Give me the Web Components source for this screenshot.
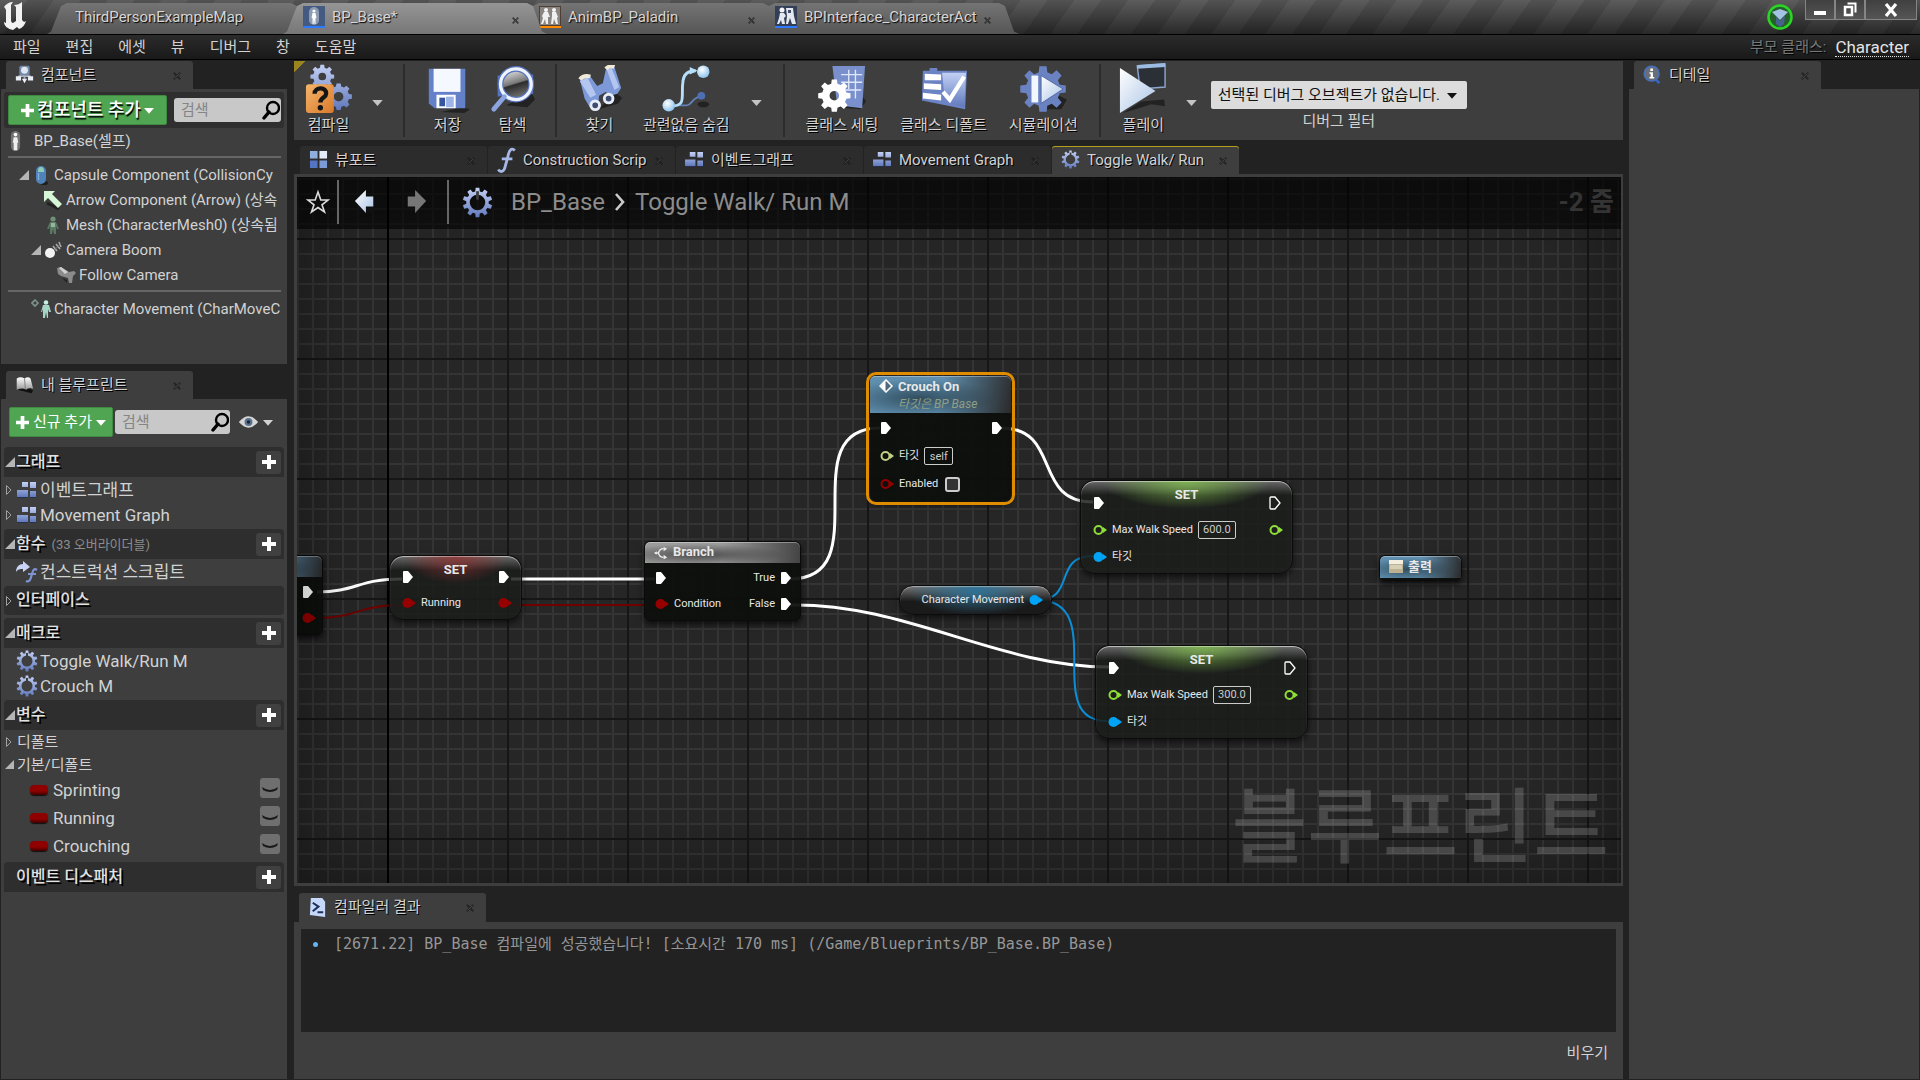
<!DOCTYPE html>
<html lang="ko">
<head>
<meta charset="utf-8">
<title>BP_Base</title>
<style>
    html, body { height: 100%; }
    body {
        margin: 0;
        background: #222222;
        color: #d2d2d2;
        font: 15px/20px Roboto, "Noto Sans CJK KR", sans-serif;
        overflow: hidden;
    }
</style>
</head>
<body>
<blueprint-editor></blueprint-editor>

<script>
// Shared by every shadow root
const baseStyle = `
    * { box-sizing: border-box; }
    button, input, select {
        font: inherit;
        color: inherit;
        margin: 0;
        padding: 0;
        border: 0;
        background: none;
        outline: none;
    }
    button { cursor: pointer; white-space: nowrap; }
`;

function define(name, html, setup) {
    const template = document.createElement('template');
    template.innerHTML = html.replace('<style>', '<style>' + baseStyle);

    customElements.define(name, class extends HTMLElement {
        constructor() {
            super();
            this.attachShadow({ mode: 'open' }).appendChild(template.content.cloneNode(true));
        }

        connectedCallback() {
            if (setup) setup.call(this, this.shadowRoot);
        }
    });
}

// Outline of a cog with a round hole
function cog(cx, cy, outer, inner, hole, teeth) {
    const points = [];
    const step = Math.PI * 2 / teeth;
    for (let i = 0; i < teeth; i++) {
        [[-0.32, inner], [-0.2, outer], [0.2, outer], [0.32, inner]].forEach(([t, r]) => {
            const a = (i + t) * step - Math.PI / 2;
            points.push((cx + r * Math.cos(a)).toFixed(2) + ' ' + (cy + r * Math.sin(a)).toFixed(2));
        });
    }
    return `M${points.join('L')}Z M${cx - hole} ${cy}a${hole} ${hole} 0 1 0 ${hole * 2} 0a${hole} ${hole} 0 1 0 ${-hole * 2} 0Z`;
}

const defs = `<defs>
    <linearGradient id="steel" x1="0" y1="0" x2="0" y2="1"><stop offset="0" stop-color="#c3d0f4"/><stop offset="1" stop-color="#6079bd"/></linearGradient>
    <linearGradient id="pale" x1="0" y1="0" x2="1" y2="1"><stop offset="0" stop-color="#fff"/><stop offset="1" stop-color="#a9c3e6"/></linearGradient>
    <linearGradient id="grey" x1="0" y1="0" x2="0" y2="1"><stop offset="0" stop-color="#fff"/><stop offset="1" stop-color="#9a9a9a"/></linearGradient>
    <linearGradient id="orange" x1="0" y1="0" x2="1" y2="1"><stop offset="0" stop-color="#f5b56b"/><stop offset="1" stop-color="#d9792b"/></linearGradient>
    <linearGradient id="lens" x1=".2" y1="0" x2=".5" y2="1"><stop offset="0" stop-color="#f2f2f2"/><stop offset=".5" stop-color="#777"/><stop offset=".55" stop-color="#2c2c2c"/><stop offset="1" stop-color="#777"/></linearGradient>
    <radialGradient id="ball" cx=".4" cy=".35" r=".65"><stop offset="0" stop-color="#fff"/><stop offset="1" stop-color="#8fc4ee"/></radialGradient>
</defs>`;

// name: [view box, markup]
const icons = {
    unreal: ['0 0 26 30', '<path fill="#f2f2f2" d="M2 6C4 3 7 1 11 1L9 4v15c0 2 1 3 2 3l3-2V6l-2-2c3 0 6-1 8-3v18l2 2 2-1c-1 4-4 7-7 8l-2-2-4 3C6 28 2 25 2 21l2 1V9L3 7Z"/>'],
    close: ['0 0 10 10', '<path d="M1 1l8 8M9 1L1 9" stroke="#1c1c1c" stroke-opacity=".75" stroke-width="2.4"/><path d="M2 8l6-6" stroke="#777" stroke-opacity=".5"/>'],
    actor: ['0 0 22 22', '<rect width="22" height="22" fill="#455a80"/><path fill="#2f7bff" d="M0 20h22v2H0z"/><rect x="6" y="1" width="10" height="18" rx="5" fill="#8e9cb2"/><circle cx="11" cy="5" r="1.6" fill="#fff"/><path fill="#fff" d="M9.500 7h3l1 5h-1v6h-1l-.5-5-.5 5h-1v-6h-1z"/>'],
    anim: ['0 0 22 22', '<rect width="22" height="22" fill="#4d3f33"/><rect x="1" y="1" width="20" height="18" fill="#8a8580"/><path fill="#ff8a00" d="M0 20h22v2H0z"/><circle cx="7" cy="4" r="2" fill="#f5f5f5"/><circle cx="15" cy="4" r="2" fill="#f5f5f5"/><path fill="#f0f0f0" d="M5 6h4l2 5-2 0v7H7l-1-5-2 5H2l2-6-1-2zM13 6h4l2 5-1 1 1 6h-2l-2-5-1 5h-2l1-8z"/>'],
    iface: ['0 0 22 22', '<rect width="22" height="22" fill="#333f58"/><path fill="#2f7bff" d="M0 20h22v2H0z"/><circle cx="7" cy="4" r="2.500" fill="#f5f5f5"/><path fill="#e4e8ef" d="M5 7h4l2 3-2 2 1 6H7l-1-4-2 4H2l2-6zM11 2h7l1 8 2 8h-4l-2-6-2 6h-2l1-8z"/><path fill="#42506e" d="M13 4h3v3h-3z"/>'],
    components: ['0 0 22 22', '<rect x="5" y="1" width="12" height="11" rx="2" fill="#7389ab"/><circle cx="11" cy="6" r="4" fill="#dfe6f2"/><path d="M11 12v4M4 13h14" stroke="#aeb7c4" stroke-width="2"/><path fill="#e9eef5" d="M1 13h6v5H1zM15 13h6v5h-6zM8 16h6l-3 5z"/>'],
    self: ['0 0 14 24', '<rect x="2" y="1" width="10" height="22" rx="5" fill="#737373"/><circle cx="7" cy="5" r="2" fill="#fff"/><path fill="#eee" d="M5 8h4l1 6H9v8H5v-8H4z"/>'],
    capsule: ['0 0 14 22', '<ellipse cx="10" cy="19" rx="4" ry="2" fill="#1e1e1e"/><rect x="2" y="2" width="10" height="18" rx="5" fill="#4f82b8"/><path d="M4 7a3 4 0 0 1 6 0v1H4z" fill="#8fc9b8"/><path d="M4.500 9v7" stroke="#7eaad8" stroke-width="1.5"/>'],
    arrow: ['0 0 20 20', '<path d="M4 13l12 6" stroke="#222" stroke-width="3"/><path fill="#d5f7d5" d="M1 1h11L9 4l10 10-4 4L5 8l-4 4z"/>'],
    mesh: ['0 0 14 20', '<circle cx="7" cy="4" r="2.6" fill="#6f9078"/><path fill="#5b7a64" d="M4 7h6l3 7h-2l-1-3v8H8l-1-5-1 5H4v-8l-1 3H1z"/><path fill="#98b59f" d="M5 8h4v4H5z"/>'],
    boom: ['0 0 18 18', '<circle cx="6" cy="12" r="5" fill="#f2f2f2"/><path d="M9 5l4 5M12 3l4 5M15 1l2 5" stroke="#aaa" stroke-width="1.6"/><path d="M10 9l7-6" stroke="#777"/>'],
    camera: ['0 0 20 18', '<path fill="#8b8b8b" d="M1 2l4-1 8 5 5-1 2 2-3 3-1 7h-3l-1-5-7-2-3-2z"/><path fill="#d0d0d0" d="M3 2l2-1 7 5-3 2z"/><path fill="#222" d="M6 12l5 2v3z"/>'],
    movement: ['0 0 20 20', '<path d="M4 1l3 3-3 3-3-3z" fill="none" stroke="#7d948b" stroke-width="1.6"/><circle cx="15" cy="3.5" r="2.3" fill="#c7efe2"/><path fill="#a5d6c6" d="M12 6h6l2 7h-2l-1-3v9h-1l-1-6-1 6h-2v-9l-1 3h-1z"/>'],
    book: ['0 0 22 22', '<path fill="#111" d="M3 17l16 4 2-3-8-4z"/><path fill="url(#grey)" d="M2 4c3-2 6-2 9 0 3-2 5-2 7 0l3 12c-3-2-6-1-8 1-3-2-7-2-11 0z"/><path d="M11 4l1 12" stroke="#777"/>'],
    search: ['0 0 18 20', '<circle cx="11" cy="8" r="6" fill="none" stroke="#000" stroke-width="2.4"/><path d="M7 12l-5 6" stroke="#000" stroke-width="3.4" stroke-linecap="round"/>'],
    plus: ['0 0 14 14', '<path fill="#fff" d="M5 0h4v5h5v4H9v5H5V9H0V5h5z"/>'],
    down: ['0 0 12 8', '<path fill="currentColor" d="M0 1h12L6 8z"/>'],
    opened: ['0 0 10 10', '<path fill="#b5b5b5" d="M10 0v10H0z"/>'],
    closed: ['0 0 8 12', '<path fill="none" stroke="#a0a0a0" d="M1.5 1.5L6 6l-4.5 4.5z"/>'],
    eye: ['0 0 24 16', '<path fill="#d5d5d5" d="M1 8q11-13 22 0-11 13-22 0z"/><circle cx="12" cy="8" r="4.5" fill="#5b7190"/><circle cx="12" cy="8" r="2" fill="#1d2633"/>'],
    lid: ['0 0 20 20', '<rect width="20" height="20" rx="3" fill="#6f6f6f"/><path d="M2 9q8 6 16 0l-1 3q-7 4-14 0z" fill="#191919"/>'],
    graph: ['0 0 20 18', '<path fill="url(#steel)" d="M5 1h6v5H5zM13 1h6v6h-6zM0 9h11v7H0zM13 10h6v6h-6z"/><path d="M0 16.5h11M13 16.5h6" stroke="#28304a"/>'],
    func: ['0 0 16 22', '<path d="M15 3c-3-3-5 0-6 6l-2 7c-1 5-4 6-6 3M4 10h9" fill="none" stroke="#a5b7e6" stroke-width="2.4"/>'],
    construct: ['0 0 22 22', '<path fill="#c9d5f7" d="M0 11c0-5 3-8 7-8V0l7 6-7 5V8c-3 0-5 0-7 3z"/><path d="M21 9c-3-2-4 0-5 4s-2 9-6 7M12 13h8" fill="none" stroke="#7d93d3" stroke-width="2.2"/>'],
    cog: ['0 0 22 22', `<path fill="url(#steel)" fill-rule="evenodd" d="${cog(11, 11, 10.5, 8, 5.5, 10)}"/><path d="M11 3v6" stroke="#3d3d3d" stroke-width="2"/>`],
    viewport: ['0 0 20 22', '<path fill="#8eaede" d="M1 2h8v8H1z"/><path fill="#e3ebf6" d="M11 2h8v8h-8z"/><path fill="#5374c2" d="M1 12h8v8H1z"/><path fill="#7c9bd6" d="M11 12h8v8h-8z"/>'],
    log: ['0 0 20 22', '<path fill="#c6d9fb" d="M3 1h12l3 4v16L2 19z"/><path d="M5 6l6 4-6 5M10 16h6" fill="none" stroke="#1f3157" stroke-width="2.2"/>'],
    details: ['0 0 22 22', '<path d="M14 16l5 5" stroke="#3566c5" stroke-width="3"/><circle cx="10" cy="10" r="8.5" fill="#6a6e75" stroke="#4a6fb5" stroke-width="2"/><path fill="#fff" d="M8.5 4h3v3h-3zM7.5 8.5h4V14H13v1.5H7.5V14h1.300v-4H7.500z"/>'],
    star: ['0 0 26 26', '<path d="M13 3l2.800 8H23l-6 4.800L19.500 23 13 18.500 6.500 23 9 15.800 3 11h7.200z" fill="none" stroke="#ddd" stroke-width="1.6"/>'],
    back: ['0 0 24 28', '<path fill="#111" d="M6 20l15 4v3z"/><path fill="url(#pale)" d="M1 13L13 1v7h8v11h-8v7z"/>'],
    forward: ['0 0 24 28', '<path fill="#777" d="M23 13L11 1v7H3v11h8v7z"/>'],
    chevron: ['0 0 14 22', '<path d="M3 3l7 8-7 8" fill="none" stroke="#ccc" stroke-width="2.6"/>'],
    compile: ['0 0 50 52', `<path fill="url(#steel)" fill-rule="evenodd" d="${cog(18, 13, 12.5, 9.5, 4, 8)} ${cog(35, 34, 14, 11, 5, 8)}"/><rect x="1" y="21" width="29" height="30" rx="3" fill="url(#orange)"/><path d="M10 31c0-8 13-7 12 0 0 4-6 4-6 9" fill="none" stroke="#151515" stroke-width="4.5"/><circle cx="16" cy="45.5" r="2.8" fill="#151515"/>`],
    save: ['0 0 50 50', '<path fill="#111" opacity=".6" d="M40 44l8 2-6 4-24-1z"/><path fill="#6480c8" d="M5 4h38v41H11l-6-5z"/><path fill="#f5f8ff" d="M10 4h28v24H10z"/><path fill="#fff" d="M13 31h20v14H13z"/><path fill="#3855a0" d="M16 34h6v9h-6z"/><path fill="#9eb4e8" d="M23 33h8v11h-8z"/>'],
    browse: ['0 0 50 50', '<path fill="#111" opacity=".6" d="M18 42l22 2 8-8-4-8z"/><path fill="#5674bd" d="M9 11h8l2 20-10 2zM38 10h8v20l-8 2z"/><circle cx="28" cy="20" r="16" fill="url(#lens)" stroke="#5674bd" stroke-width="6"/><circle cx="28" cy="20" r="16" fill="none" stroke="#eef3fd" stroke-width="3.4"/><path d="M16 33L5 46" stroke="#8ca5e0" stroke-width="5" stroke-linecap="round"/>'],
    find: ['0 0 50 50', '<path fill="#111" opacity=".6" d="M24 46l20-6 4-6-8-6z"/><path fill="#7d99d8" d="M4 15l11-3 7 10 6-3 3-14 9-3 7 22-4 6-7 2-5-4-7 4-1 12-8 1-6-10z"/><path fill="#b4c6f0" d="M4 17l8-4 9 18-6 3zM32 5l5-2 8 20-5 3z"/><path d="M4 15q4-5 11-3M31 4q4-4 9-2" stroke="#f1ead8" stroke-width="4" fill="none"/><circle cx="20" cy="42" r="4.500" fill="#3d4c70" stroke="#e7edf8" stroke-width="3"/><circle cx="34" cy="35" r="4.500" fill="#3d4c70" stroke="#e7edf8" stroke-width="3"/>'],
    hide: ['0 0 50 50', '<path d="M6 42h20c5 0 5-8 14-9" fill="none" stroke="#6482ba" stroke-width="1.8"/><path d="M8 43c19 0 11-10 14-27 1-7 6-10 13-10" fill="none" stroke="#b6dffb" stroke-width="3"/><path fill="#b6dffb" d="M29 2l8 4-8 4z"/><circle cx="43" cy="7" r="6.5" fill="url(#ball)"/><circle cx="7" cy="42" r="6.5" fill="url(#ball)"/><circle cx="41" cy="32" r="4" fill="#4f6fb5"/><ellipse cx="43" cy="41" rx="6" ry="3" fill="#222"/>'],
    settings: ['0 0 50 50', `<path fill="#111" opacity=".6" d="M18 44l26 2 6-8-4-6z"/><path fill="#7a90cc" d="M15 1h34l-3 44-26-3z"/><path d="M24 10h22M24 18h22M28 26h17M32 5v20M39 5v30" stroke="#dfe7fb" stroke-width="1.4"/><path fill="#fff" fill-rule="evenodd" d="${cog(17, 32, 17, 13, 5, 8)}"/>`],
    defaults: ['0 0 50 50', '<path fill="#6c83c4" d="M3 6h7V3h8v3h31l-2 40-45-9z"/><path fill="url(#steel)" d="M23 8h25l-2 36-20-6z"/><path fill="#fff" d="M5 9l17 1v6H5zM4 19l18 1v6L4 25zM3 29l19 2v6L3 35z"/><path d="M24 28l7 8 15-24" fill="none" stroke="#fff" stroke-width="4.5"/>'],
    simulate: ['0 0 50 50', `<path fill="#111" opacity=".6" d="M20 46l24 0 6-10-8-4z"/><path fill="#6b82c2" d="${cog(25, 25, 24, 18, 2, 8)}"/><path fill="#f1f6ff" d="M13 11h7v28h-7z"/><path fill="url(#pale)" d="M23 11l23 14-23 15z" stroke="#5069a5"/>`],
    play: ['0 0 50 54', '<path fill="#111" opacity=".6" d="M4 52l30-9 14 2-1-7-24 2z"/><path fill="#2b2f36" stroke="#8ca6cf" stroke-width="1.5" d="M19 3l29-2v24l-26 2z"/><path fill="#9cbbe2" d="M19 2l29-2v4l-29 2z"/><path fill="url(#pale)" d="M1 5l37 24L1 52z"/>'],
    tutorial: ['0 0 26 26', '<circle cx="13" cy="13" r="12.5" fill="#275f2c"/><circle cx="13" cy="13" r="11.5" fill="none" stroke="#2bd524" stroke-width="2.5"/><path fill="#a3c2e4" d="M5 8l8-3 8 3-8 8z"/><path fill="#48628f" d="M9 13l4 4 5-5-1 8-4 3-4-3z"/>'],
    min: ['0 0 16 16', '<path fill="#fff" d="M2 9h12v4H2z"/>'],
    restore: ['0 0 16 16', '<path d="M5.500 1.500h8v9" stroke="#fff" stroke-width="2" fill="none"/><path d="M3 5h7v8H3z" stroke="#fff" stroke-width="2.5" fill="none"/>'],
    exit: ['0 0 16 16', '<path d="M3 2l10 12M13 2L3 14" stroke="#fff" stroke-width="3.2"/>'],
    branch: ['0 0 16 16', '<path d="M2 8h3c1-4 3-5 6-5M5 8c1 4 3 5 6 5" fill="none" stroke="#eee" stroke-width="1.5"/><path fill="#eee" d="M0 8l3-2v4zM11 1l4 2-4 3zM11 10l4 3-4 2z"/>'],
    event: ['0 0 14 14', '<path d="M7 1l6 6-6 6-6-6z" fill="#50687c" stroke="#fff" stroke-width="1.5"/><path d="M6.500 2v10L1.500 7z" fill="#fff"/>'],
    output: ['0 0 14 14', '<path fill="#f3eedd" d="M0 0h14v4H0z"/><path fill="#bcb291" d="M0 4h14v9H0z"/><path fill="#d6cfb5" d="M1 5h12v4H1z"/>'],
    exec: ['0 0 12 14', '<path fill="#fff" d="M1 2q0-1 1-1h4l5 6-5 6H2q-1 0-1-1z"/>'],
    'exec-open': ['0 0 12 14', '<path fill="none" stroke="#fff" stroke-width="1.3" d="M1 2q0-1 1-1h4l5 6-5 6H2q-1 0-1-1z"/>'],
    data: ['0 0 14 12', '<circle cx="5.5" cy="6" r="5" fill="currentColor"/><path fill="currentColor" d="M10 3l4 3-4 3z"/>'],
    'data-open': ['0 0 14 12', '<circle cx="5.5" cy="6" r="4" fill="none" stroke="currentColor" stroke-width="2"/><path fill="currentColor" d="M10 3l4 3-4 3z"/>'],
};

define('ue-icon', `
    <style>
    :host { display: inline-flex; flex: none; }
    svg { display: block; }
    </style>
    <span></span>
`, function (root) {
    const [box, markup] = icons[this.getAttribute('name')];
    const [, , w, h] = box.split(' ').map(Number);
    const width = Number(this.getAttribute('size')) || w;
    root.querySelector('span').innerHTML =
        `<svg viewBox="${box}" width="${width}" height="${Math.round(width * h / w)}" aria-hidden="true">${defs}${markup}</svg>`;
});

// Title bar tab with slanted sides
define('window-tab', `
    <style>
    :host {
        position: relative;
        display: flex;
        align-items: center;
        width: 236px;
        height: 31px;
        padding: 0 20px 3px 0;
        color: #d6d6d6;
    }
    :host::before {
        content: "";
        position: absolute;
        inset: 0 -8px 0 -20px;
        background: linear-gradient(#747474, #565656);
        clip-path: polygon(0 100%, 4px 92%, 14px 10%, 20px 0, calc(100% - 20px) 0, calc(100% - 14px) 10%, calc(100% - 5px) 92%, 100% 100%);
    }
    :host([active]) { z-index: 1; }
    :host([active])::before { background: linear-gradient(#959595, #777777); }
    ue-icon { position: relative; margin-right: 7px; }
    button.label {
        position: relative;
        flex: 1;
        min-width: 0;
        overflow: hidden;
        text-align: left;
        text-shadow: 1px 1px 1px #000;
    }
    button.close { position: relative; padding: 3px 0 0 6px; }
    button.close ue-icon { margin: 0; }
    </style>
    <button class="label"><slot></slot></button>
`, function (root) {
    const icon = this.getAttribute('icon');
    if (!icon) return;
    root.querySelector('.label').insertAdjacentHTML('beforebegin', `<ue-icon name="${icon}"></ue-icon>`);
    root.querySelector('.label').insertAdjacentHTML('afterend', '<button class="close" aria-label="닫기"><ue-icon name="close" size="7"></ue-icon></button>');
});

define('title-bar', `
    <style>
    :host {
        display: flex;
        align-items: flex-end;
        flex: none;
        height: 34px;
        background:
            linear-gradient(rgba(255,255,255,.1), rgba(0,0,0,.45)),
            repeating-linear-gradient(125deg, #4a4a4a 0 22px, #3f3f3f 22px 44px);
    }
    .logo { width: 67px; height: 34px; padding: 1px 0 0 2px; }
    .tabs { display: flex; flex: 1; }
    .tabs window-tab:first-child { padding-left: 8px; }
    ue-icon.tutorial { align-self: flex-start; padding: 4px 12px 0 0; }
    .buttons { display: flex; align-self: flex-start; padding-right: 3px; }
    .buttons button {
        display: flex;
        justify-content: center;
        align-items: center;
        width: 30px;
        height: 20px;
        border: 1px solid #858585;
        border-top: 0;
        background: linear-gradient(#404040, #555555);
    }
    .buttons button:last-child { width: 52px; }
    </style>
    <div class="logo"><ue-icon name="unreal" size="26"></ue-icon></div>
    <div class="tabs">
        <window-tab>ThirdPersonExampleMap</window-tab>
        <window-tab icon="actor" active>BP_Base*</window-tab>
        <window-tab icon="anim">AnimBP_Paladin</window-tab>
        <window-tab icon="iface">BPInterface_CharacterAct</window-tab>
    </div>
    <ue-icon class="tutorial" name="tutorial" size="26"></ue-icon>
    <div class="buttons">
        <button aria-label="최소화"><ue-icon name="min"></ue-icon></button>
        <button aria-label="복원"><ue-icon name="restore"></ue-icon></button>
        <button aria-label="닫기"><ue-icon name="exit"></ue-icon></button>
    </div>
`);

define('menu-bar', `
    <style>
    :host {
        display: flex;
        align-items: center;
        flex: none;
        gap: 25px;
        height: 26px;
        padding: 0 11px 0 13px;
        border: solid #000;
        border-width: 1px 0;
        background: linear-gradient(#2b2b2b, #191919);
    }
    .parent { margin-left: auto; color: #777777; text-shadow: 1px 1px 1px #000; }
    a { margin-left: -16px; color: #e4e4e4; font-size: 17px; line-height: 18px; text-decoration: none; border-bottom: 1px dotted #ddd; }
    </style>
    <button>파일</button><button>편집</button><button>에셋</button><button>뷰</button>
    <button>디버그</button><button>창</button><button>도움말</button>
    <span class="parent">부모 클래스:</span>
    <a href="#character">Character</a>
`);

define('dock-tab', `
    <style>
    :host {
        display: flex;
        align-items: center;
        flex: none;
        width: 187px;
        height: 28px;
        padding: 0 12px 1px 6px;
        border-radius: 3px 3px 0 0;
        background: #2c2c2c;
    }
    :host([active]) { background: #3e3e3e; }
    :host([current]) { background: #3e3e3e; box-shadow: inset 0 1px 0 #b3a01c; }
    .icon { display: flex; justify-content: center; width: 24px; margin-right: 5px; }
    .label {
        flex: 1;
        min-width: 0;
        overflow: hidden;
        text-align: left;
        text-shadow: 1px 1px 0 #000;
    }
    .close { padding-left: 4px; }
    </style>
    <span class="icon"></span>
    <button class="label"><slot></slot></button>
    <button class="close" aria-label="닫기"><ue-icon name="close" size="8"></ue-icon></button>
`, function (root) {
    root.querySelector('.icon').innerHTML = `<ue-icon name="${this.getAttribute('icon')}" size="19"></ue-icon>`;
});

define('search-box', `
    <style>
    :host { display: flex; min-width: 0; }
    label {
        display: flex;
        align-items: center;
        width: 100%;
        height: 24px;
        padding: 0 1px 0 7px;
        border-radius: 3px;
        background: #c8c8c8;
        color: #111;
    }
    input { flex: 1; min-width: 0; }
    input::placeholder { color: #858585; opacity: 1; }
    </style>
    <label><input type="text" placeholder="검색" aria-label="검색"><ue-icon name="search"></ue-icon></label>
`);

define('add-button', `
    <style>
    :host { display: flex; flex: none; }
    button {
        display: flex;
        align-items: center;
        justify-content: center;
        gap: 4px;
        width: 100%;
        height: 30px;
        border: 1px solid #3f8a40;
        border-radius: 2px;
        background: #50a552;
        color: #fff;
    }
    :host([strong]) button { font-size: 18px; gap: 3px; font-weight: 500; text-shadow: 1px 2px 1px #000; }
    </style>
    <button><ue-icon name="plus" size="13"></ue-icon><slot></slot><ue-icon name="down" size="10"></ue-icon></button>
`);

define('tree-row', `
    <style>
    :host {
        display: flex;
        align-items: center;
        height: 25px;
        overflow: hidden;
        white-space: nowrap;
    }
    .arrow { display: flex; flex: none; width: 11px; }
    .icon { display: flex; flex: none; justify-content: center; width: 22px; }
    .text { padding-left: 2px; }
    </style>
    <span class="arrow"></span><span class="icon"></span><span class="text"><slot></slot></span>
`, function (root) {
    const arrow = this.getAttribute('arrow');
    this.style.paddingLeft = (this.getAttribute('indent') || 0) + 'px';
    if (arrow) root.querySelector('.arrow').innerHTML = `<ue-icon name="${arrow}"></ue-icon>`;
    root.querySelector('.icon').innerHTML = `<ue-icon name="${this.getAttribute('icon')}"></ue-icon>`;
});

define('category-header', `
    <style>
    :host {
        display: flex;
        align-items: center;
        height: 30px;
        padding: 0 3px 0 1px;
        border-radius: 4px 4px 0 0;
        background: #2e2e2e;
    }
    .arrow { display: flex; width: 11px; }
    h3 {
        flex: 1;
        margin: 0;
        font-size: 16px;
        font-weight: 500;
        color: #e2e2e2;
        text-shadow: 2px 2px 0 #000;
    }
    small { margin-left: 6px; font-size: 13px; font-weight: 400; color: #8c8c8c; text-shadow: none; }
    .add {
        display: flex;
        align-items: center;
        justify-content: center;
        width: 25px;
        height: 23px;
        border-radius: 3px;
        background: #404040;
    }
    </style>
    <span class="arrow"></span>
    <h3><slot></slot><small></small></h3>
`, function (root) {
    const arrow = this.getAttribute('arrow');
    if (arrow) root.querySelector('.arrow').innerHTML = `<ue-icon name="${arrow}"></ue-icon>`;
    root.querySelector('small').textContent = this.getAttribute('note') || '';
    if (!this.hasAttribute('plain')) {
        root.querySelector('h3').insertAdjacentHTML('afterend', '<button class="add" aria-label="추가"><ue-icon name="plus"></ue-icon></button>');
    }
});

define('variable-row', `
    <style>
    :host { display: flex; align-items: center; height: 28px; padding: 0 4px 0 26px; font-size: 17px; }
    i { width: 18px; height: 10px; margin-right: 5px; border-radius: 4px; background: linear-gradient(#8f0000 60%, #3d0000); box-shadow: 0 1px 1px #111; }
    span { flex: 1; }
    </style>
    <i></i><span><slot></slot></span>
    <button aria-label="공개 여부"><ue-icon name="lid"></ue-icon></button>
`);

define('components-panel', `
    <style>
    :host { display: block; margin-bottom: 7px; }
    dock-tab { margin-left: 5px; }
    .panel { height: 275px; padding: 3px; background: #3e3e3e; }
    .tools { display: flex; align-items: center; gap: 7px; height: 36px; padding: 0 3px 0 4px; background: #2f2f2f; border-radius: 3px; }
    add-button { width: 159px; }
    search-box { flex: 1; }
    .self { display: flex; align-items: center; gap: 12px; height: 28px; padding: 0 0 2px 5px; }
    hr { height: 2px; margin: 0 3px 4px 4px; border: 0; background: #666; }
    .list { padding: 0 2px 0 0; }
    .list hr { margin: 3px 1px 4px 4px; }
    </style>
    <dock-tab icon="components" active>컴포넌트</dock-tab>
    <div class="panel">
        <div class="tools">
            <add-button strong>컴포넌트 추가</add-button>
            <search-box></search-box>
        </div>
        <div class="self"><ue-icon name="self" size="13"></ue-icon><span>BP_Base(셀프)</span></div>
        <hr>
        <div class="list">
            <tree-row indent="15" arrow="opened" icon="capsule">Capsule Component (CollisionCy</tree-row>
            <tree-row indent="27" icon="arrow">Arrow Component (Arrow) (상속</tree-row>
            <tree-row indent="27" icon="mesh">Mesh (CharacterMesh0) (상속됨</tree-row>
            <tree-row indent="27" arrow="opened" icon="boom">Camera Boom</tree-row>
            <tree-row indent="40" icon="camera">Follow Camera</tree-row>
            <hr>
            <tree-row indent="15" icon="movement">Character Movement (CharMoveC</tree-row>
        </div>
    </div>
`);

define('blueprint-panel', `
    <style>
    :host { display: flex; flex-direction: column; flex: 1; }
    dock-tab { margin-left: 5px; }
    .panel { flex: 1; padding: 8px 3px; background: #3e3e3e; }
    .tools { display: flex; align-items: center; gap: 2px; height: 30px; margin-bottom: 10px; padding: 0 11px 0 5px; }
    add-button { width: 104px; }
    search-box { width: 115px; }
    .view { display: flex; align-items: center; gap: 4px; margin-left: auto; }
    tree-row { font-size: 17px; }
    .group { display: flex; align-items: center; gap: 3px; height: 23px; padding-left: 1px; }
    .group ue-icon { width: 9px; }
    .items { padding-bottom: 2px; }
    category-header[plain] { height: 29px; margin-bottom: 3px; border-radius: 4px; }
    </style>
    <dock-tab icon="book" active>내 블루프린트</dock-tab>
    <div class="panel">
        <div class="tools">
            <add-button>신규 추가</add-button>
            <search-box></search-box>
            <button class="view" aria-label="보기 옵션"><ue-icon name="eye" size="21"></ue-icon><ue-icon name="down" size="10"></ue-icon></button>
        </div>
        <category-header arrow="opened">그래프</category-header>
        <div class="items">
            <tree-row indent="1" arrow="closed" icon="graph">이벤트그래프</tree-row>
            <tree-row indent="1" arrow="closed" icon="graph">Movement Graph</tree-row>
        </div>
        <category-header arrow="opened" note="(33 오버라이더블)">함수</category-header>
        <div class="items">
            <tree-row indent="1" icon="construct">컨스트럭션 스크립트</tree-row>
        </div>
        <category-header arrow="closed" plain>인터페이스</category-header>
        <category-header arrow="opened">매크로</category-header>
        <div class="items">
            <tree-row indent="1" icon="cog">Toggle Walk/Run M</tree-row>
            <tree-row indent="1" icon="cog">Crouch M</tree-row>
        </div>
        <category-header arrow="opened">변수</category-header>
        <div class="group"><ue-icon name="closed"></ue-icon>디폴트</div>
        <div class="group"><ue-icon name="opened" size="9"></ue-icon>기본/디폴트</div>
        <div class="items">
            <variable-row>Sprinting</variable-row>
            <variable-row>Running</variable-row>
            <variable-row>Crouching</variable-row>
        </div>
        <category-header>이벤트 디스패처</category-header>
    </div>
`);

define('tool-button', `
    <style>
    :host { display: flex; }
    button {
        display: flex;
        flex-direction: column;
        align-items: center;
        min-width: 65px;
        padding: 2px 8px 0;
        text-shadow: 1px 1px 0 #000;
    }
    .icon { display: flex; align-items: center; height: 52px; }
    .label { padding: 0 3px; }
    </style>
    <button><span class="icon"></span><span class="label"><slot></slot></span></button>
`, function (root) {
    root.querySelector('.icon').innerHTML = `<ue-icon name="${this.getAttribute('icon')}" size="48"></ue-icon>`;
});

define('editor-toolbar', `
    <style>
    :host {
        display: flex;
        flex: none;
        height: 79px;
        padding-left: 2px;
        background: linear-gradient(135deg, #9a8420 8px, transparent 8px), #3e3e3e;
    }
    .more { width: 32px; color: #c4c4c4; }
    .line { width: 2px; margin: 3px 10px; background: #2b2b2b; }
    .filter { display: flex; flex-direction: column; align-items: center; gap: 2px; padding: 20px 0 0 3px; }
    .pick { position: relative; display: flex; }
    select {
        appearance: none;
        width: 256px;
        height: 28px;
        padding: 0 0 0 7px;
        border-radius: 2px;
        background: #dcdcdc;
        color: #111;
    }
    .pick ue-icon { position: absolute; right: 10px; top: 11px; color: #111; pointer-events: none; }
    </style>
    <tool-button icon="compile">컴파일</tool-button>
    <button class="more" aria-label="컴파일 옵션"><ue-icon name="down" size="11"></ue-icon></button>
    <span class="line"></span>
    <tool-button icon="save">저장</tool-button>
    <tool-button icon="browse">탐색</tool-button>
    <span class="line"></span>
    <tool-button icon="find">찾기</tool-button>
    <tool-button icon="hide">관련없음 숨김</tool-button>
    <button class="more" aria-label="숨김 옵션"><ue-icon name="down" size="11"></ue-icon></button>
    <span class="line"></span>
    <tool-button icon="settings">클래스 세팅</tool-button>
    <tool-button icon="defaults">클래스 디폴트</tool-button>
    <tool-button icon="simulate">시뮬레이션</tool-button>
    <span class="line"></span>
    <tool-button icon="play">플레이</tool-button>
    <button class="more" aria-label="플레이 옵션"><ue-icon name="down" size="11"></ue-icon></button>
    <div class="filter">
        <div class="pick">
            <select id="debug"><option>선택된 디버그 오브젝트가 없습니다.</option></select>
            <ue-icon name="down" size="10"></ue-icon>
        </div>
        <label for="debug">디버그 필터</label>
    </div>
`);

// One end of a wire, with its label and default value
define('node-pin', `
    <style>
    :host { display: flex; align-items: center; gap: 5px; white-space: nowrap; }
    :host([out]) { flex-direction: row-reverse; }
    :host([color=bool]) { --pin: #960000; }
    :host([color=self]) { --pin: #c3cf86; }
    :host([color=float]) { --pin: #8fdd38; }
    :host([color=object]) { --pin: #00a3f5; }
    .icon { display: flex; width: 14px; color: var(--pin); }
    </style>
    <span class="icon"></span><slot></slot>
`, function (root) {
    root.querySelector('.icon').innerHTML = `<ue-icon name="${this.getAttribute('type')}"></ue-icon>`;
});

define('graph-node', `
    <style>
    :host {
        position: absolute;
        display: block;
        border: 1px solid #0b0b0b;
        border-radius: 6px;
        background: rgba(12,15,12,.94);
        box-shadow: 0 3px 6px rgba(0,0,0,.7);
        box-sizing: border-box;
        color: #e8e8e8;
        font-size: 11px;
        line-height: 16px;
    }
    header {
        display: flex;
        align-items: center;
        gap: 5px;
        height: 21px;
        padding: 0 9px;
        border-radius: 5px 5px 0 0;
        box-shadow: inset 0 1px 0 rgba(255,255,255,.35);
    }
    b { font-size: 13px; font-weight: 700; }
    .body { padding: 2px 6px 3px 10px; }
    :host([kind=branch]) header { background: radial-gradient(ellipse at 35% 60%, rgba(40,40,40,.7), transparent 60%), linear-gradient(90deg, #9b9b9b 50%, #444); }
    :host([kind=call]) header, :host([kind=output]) header { background: radial-gradient(ellipse at 35% 60%, rgba(30,50,60,.7), transparent 60%), linear-gradient(100deg, #5f8eae 50%, #2a2a2a); }
    :host([selected]) { border: 0; outline: 3px solid #e08c00; outline-offset: 1px; }
    :host([selected]) header { align-items: flex-start; height: 37px; padding-top: 3px; }
    :host([selected]) .body { padding-top: 1px; }
    :host([kind=output]) header { height: 22px; }
    :host([kind=output]) .body { padding: 0 0 2px; }
    /* variable setters and getters are see-through */
    :host([kind=set]), :host([kind=get]) { border-radius: 14px; background: rgba(27,29,27,.85); box-shadow: inset 0 1px 1px rgba(255,255,255,.4), 0 3px 6px rgba(0,0,0,.6); }
    :host([kind=set]) header {
        position: absolute;
        inset: 0 0 auto;
        justify-content: center;
        height: 28px;
        border-radius: 14px 14px 0 0;
        background: radial-gradient(ellipse 40% 100% at 50% 0, var(--glow), transparent), linear-gradient(rgba(200,200,200,.45), transparent 50%);
    }
    :host([kind=set]) .body { position: relative; padding: 8px 9px 3px 12px; }
    :host([kind=get]) header { display: none; }
    :host([kind=get]) { background: radial-gradient(ellipse 45% 90% at 50% 15%, #2f7296, transparent), linear-gradient(#777, #1a1a1a 55%); }
    :host([kind=get]) .body { padding: 6px 8px 6px 15px; }
    </style>
    <header><slot name="icon"></slot><div><b></b><slot name="note"></slot></div></header>
    <div class="body"><slot></slot></div>
`, function (root) {
    this.style.left = this.getAttribute('x') + 'px';
    this.style.top = this.getAttribute('y') + 'px';
    this.style.width = this.getAttribute('w') + 'px';
    this.style.setProperty('--row', (this.getAttribute('row') || 26) + 'px');
    this.style.setProperty('--glow', this.getAttribute('glow'));
    root.querySelector('b').textContent = this.getAttribute('heading') || '';
});

define('graph-canvas', `
    <style>
    :host {
        position: relative;
        display: block;
        flex: 1;
        min-height: 0;
        border: 3px solid #3e3e3e;
        border-right-width: 2px;
        overflow: hidden;
        background:
            linear-gradient(#000, #000) 90px 0 / 2px 100% no-repeat,
            linear-gradient(90deg, #161616 2px, transparent 2px) 90px 0 / 120px 120px,
            linear-gradient(#161616 2px, transparent 2px) 0 61px / 120px 120px,
            linear-gradient(90deg, #343434 2px, transparent 2px) 0 0 / 15px 15px,
            linear-gradient(#343434 2px, transparent 2px) 0 1px / 15px 15px,
            #262626;
    }
    .shade { position: absolute; inset: 0; box-shadow: inset 0 0 80px rgba(0,0,0,.45); pointer-events: none; }
    nav {
        position: absolute;
        inset: 0 0 auto;
        display: flex;
        align-items: center;
        height: 52px;
        padding: 0 7px 2px;
        background: rgba(0,0,0,.6);
        color: #8c8c8c;
        font-size: 24px;
    }
    nav button { display: flex; justify-content: center; }
    nav .star { width: 27px; }
    nav .step { width: 51px; }
    nav .sep { width: 2px; height: 44px; background: #666; margin-left: 6px; }
    nav .cog { margin: 0 18px 0 13px; }
    nav a { color: inherit; text-decoration: none; }
    nav .chevron { margin: 0 8px; }
    .zoom { margin-left: auto; color: #343434; font-size: 26px; font-weight: 700; }
    .mark { position: absolute; right: 12px; bottom: 14px; font-size: 82px; line-height: 82px; font-weight: 500; color: rgba(255,255,255,.17); }
    svg.wires { position: absolute; inset: 0; width: 100%; height: 100%; fill: none; stroke: #fff; stroke-width: 3; }
    .row { display: flex; align-items: center; justify-content: space-between; height: var(--row); }
    .value { width: 38px; height: 18px; margin-left: 2px; border: 1px solid #ccc; border-radius: 2px; color: #ccc; text-align: center; }
    .self { width: 29px; }
    input[type=checkbox] { appearance: none; width: 15px; height: 15px; margin-left: 4px; border: 2px solid #ccc; border-radius: 3px; background: #333; }
    label { display: flex; align-items: center; gap: 3px; }
    em { display: block; color: #8f9f85; font-size: 12px; }
    </style>
    <svg class="wires" aria-hidden="true">
        <path d="M20 415C60 415 60 402 105 402M214 402H358M493 402C583 402 493 251 583 251M704 251C765 251 735 325 796 325M493 428C610 426 700 490 812 490"/>
        <path d="M20 441C60 441 60 428 106 428M212 428H360" stroke="#700000" stroke-width="2"/>
        <path d="M740 423C780 423 755 379 796 379M740 423C813 423 743 544 810 544" stroke="#0a8fd6" stroke-width="2"/>
    </svg>

    <graph-node kind="call" x="-60" y="378" w="86">
        <div class="row"><span></span><node-pin out type="exec"></node-pin></div>
        <div class="row"><span></span><node-pin out type="data" color="bool"></node-pin></div>
    </graph-node>

    <graph-node kind="set" heading="SET" glow="rgba(150,50,50,.8)" x="92" y="378" w="133">
        <div class="row"><node-pin type="exec"></node-pin><node-pin out type="exec"></node-pin></div>
        <div class="row"><node-pin type="data" color="bool">Running</node-pin><node-pin out type="data" color="bool"></node-pin></div>
    </graph-node>

    <graph-node kind="branch" heading="Branch" x="347" y="364" w="157">
        <ue-icon slot="icon" name="branch" size="14"></ue-icon>
        <div class="row"><node-pin type="exec"></node-pin><node-pin out type="exec">True</node-pin></div>
        <div class="row"><node-pin type="data" color="bool">Condition</node-pin><node-pin out type="exec">False</node-pin></div>
    </graph-node>

    <graph-node kind="call" heading="Crouch On" selected row="28" x="573" y="199" w="141">
        <ue-icon slot="icon" name="event"></ue-icon>
        <em slot="note">타깃은 BP Base</em>
        <div class="row"><node-pin type="exec"></node-pin><node-pin out type="exec"></node-pin></div>
        <div class="row"><node-pin type="data-open" color="self"><label>타깃 <input class="value self" value="self"></label></node-pin></div>
        <div class="row"><node-pin type="data-open" color="bool"><label>Enabled <input type="checkbox"></label></node-pin></div>
    </graph-node>

    <graph-node kind="set" heading="SET" glow="rgba(130,190,80,.85)" row="27" x="783" y="303" w="213">
        <div class="row"><node-pin type="exec"></node-pin><node-pin out type="exec-open"></node-pin></div>
        <div class="row"><node-pin type="data-open" color="float"><label>Max Walk Speed <input class="value" value="600.0"></label></node-pin><node-pin out type="data-open" color="float"></node-pin></div>
        <div class="row"><node-pin type="data" color="object">타깃</node-pin></div>
    </graph-node>

    <graph-node kind="set" heading="SET" glow="rgba(130,190,80,.85)" row="27" x="798" y="468" w="213">
        <div class="row"><node-pin type="exec"></node-pin><node-pin out type="exec-open"></node-pin></div>
        <div class="row"><node-pin type="data-open" color="float"><label>Max Walk Speed <input class="value" value="300.0"></label></node-pin><node-pin out type="data-open" color="float"></node-pin></div>
        <div class="row"><node-pin type="data" color="object">타깃</node-pin></div>
    </graph-node>

    <graph-node kind="get" x="602" y="408" w="153">
        <node-pin out type="data" color="object">Character Movement</node-pin>
    </graph-node>

    <graph-node kind="output" heading="출력" x="1082" y="378" w="83">
        <ue-icon slot="icon" name="output"></ue-icon>
    </graph-node>

    <div class="shade"></div>
    <nav>
        <button class="star" aria-label="즐겨찾기"><ue-icon name="star"></ue-icon></button>
        <span class="sep"></span>
        <button class="step" aria-label="뒤로"><ue-icon name="back" size="22"></ue-icon></button>
        <button class="step" aria-label="앞으로"><ue-icon name="forward" size="22"></ue-icon></button>
        <span class="sep"></span>
        <ue-icon class="cog" name="cog" size="31"></ue-icon>
        <a href="#base">BP_Base</a>
        <ue-icon class="chevron" name="chevron"></ue-icon>
        <a href="#macro">Toggle Walk/ Run M</a>
        <span class="zoom">-2 줌</span>
    </nav>
    <div class="mark">블루프린트</div>
`);

define('compiler-results', `
    <style>
    :host { display: block; margin-top: 7px; }
    dock-tab { margin-left: 5px; height: 29px; }
    .panel { height: 157px; padding: 7px; background: #3e3e3e; }
    ul {
        height: 103px;
        margin: 0;
        padding: 5px 12px;
        list-style: none;
        background: #222222;
        color: #969696;
        font: 15px/20px "DejaVu Sans Mono", "Noto Sans CJK KR", monospace;
    }
    li { display: flex; align-items: center; gap: 16px; }
    li::before { content: ""; width: 5px; height: 5px; border-radius: 50%; background: #63b4ee; }
    .clear { display: block; margin: 11px 8px 0 auto; }
    </style>
    <dock-tab icon="log" active>컴파일러 결과</dock-tab>
    <div class="panel">
        <ul><li>[2671.22] BP_Base 컴파일에 성공했습니다! [소요시간 170 ms] (/Game/Blueprints/BP_Base.BP_Base)</li></ul>
        <button class="clear">비우기</button>
    </div>
`);

define('blueprint-editor', `
    <style>
    :host { display: flex; flex-direction: column; height: 100vh; }
    main {
        flex: 1;
        min-height: 0;
        display: grid;
        grid-template-columns: 287px minmax(0, 1fr) 290px;
        column-gap: 6px;
        padding: 1px;
    }
    .left, .center, .right { display: flex; flex-direction: column; min-height: 0; }
    .left { padding-right: 1px; }
    .tabs { display: flex; gap: 1px; margin: 6px 0 0 6px; }
    .right dock-tab { margin-left: 5px; }
    .details { flex: 1; background: #3e3e3e; }
    </style>
    <title-bar></title-bar>
    <menu-bar></menu-bar>
    <main>
        <div class="left">
            <components-panel></components-panel>
            <blueprint-panel></blueprint-panel>
        </div>
        <div class="center">
            <editor-toolbar></editor-toolbar>
            <div class="tabs">
                <dock-tab icon="viewport">뷰포트</dock-tab>
                <dock-tab icon="func">Construction Scrip</dock-tab>
                <dock-tab icon="graph">이벤트그래프</dock-tab>
                <dock-tab icon="graph">Movement Graph</dock-tab>
                <dock-tab icon="cog" current>Toggle Walk/ Run</dock-tab>
            </div>
            <graph-canvas></graph-canvas>
            <compiler-results></compiler-results>
        </div>
        <div class="right">
            <dock-tab icon="details" active>디테일</dock-tab>
            <div class="details"></div>
        </div>
    </main>
`);
</script>
</body>
</html>
